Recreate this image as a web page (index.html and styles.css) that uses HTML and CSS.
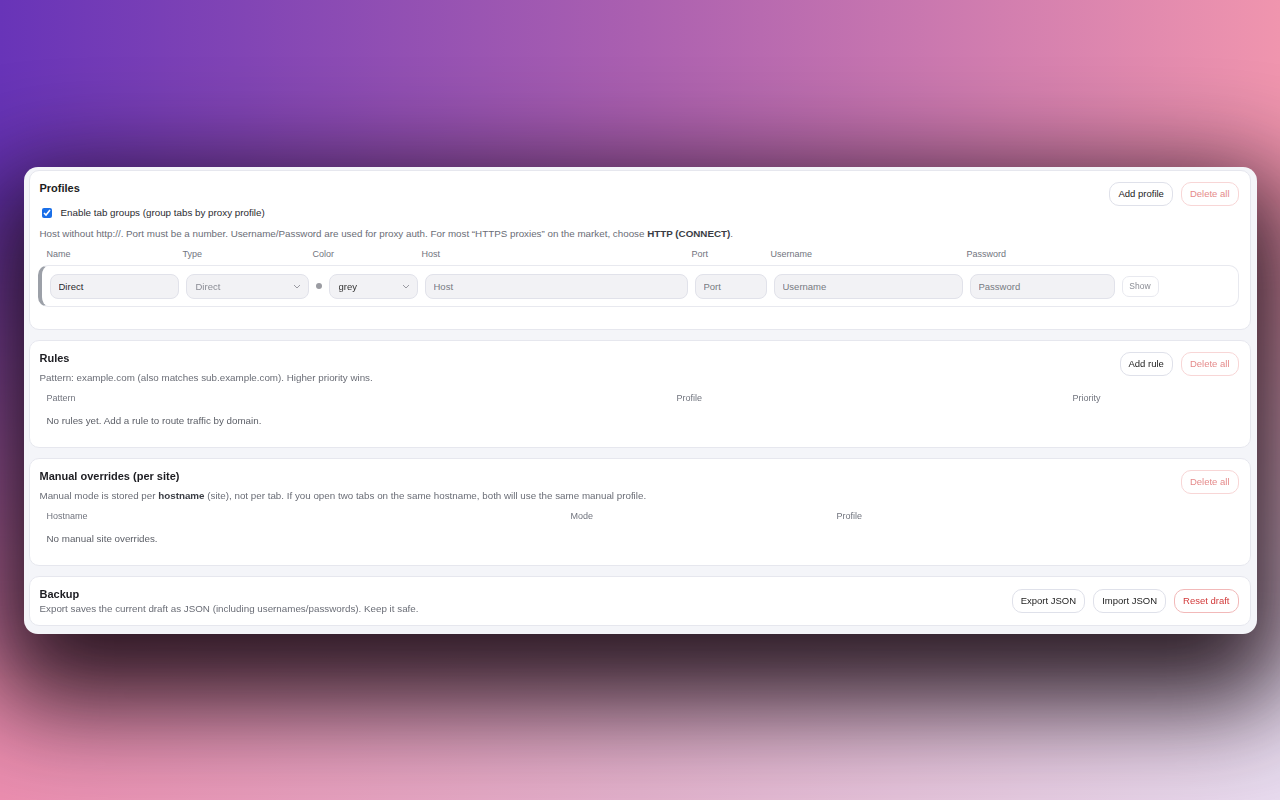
FILE: index.html
```html
<!DOCTYPE html>
<html lang="en">
<head>
  <meta charset="UTF-8" />
  <meta name="viewport" content="width=device-width, initial-scale=1.0"/>
  <title>Proxy options</title>
  <link rel="stylesheet" href="styles.css">
</head>
<body>
  <div class="window">

    <!-- Profiles -->
    <section class="card card-profiles">
      <div class="card-head">
        <div class="head-text">
          <h2>Profiles</h2>
          <label class="check"><input type="checkbox" checked> Enable tab groups (group tabs by proxy profile)</label>
        </div>
        <div class="actions">
          <button class="btn">Add profile</button>
          <button class="btn soft-red">Delete all</button>
        </div>
      </div>
      <p class="help help-profiles">Host without http://. Port must be a number. Username/Password are used for proxy auth. For most “HTTPS proxies” on the market, choose <b>HTTP (CONNECT)</b>.</p>

      <div class="profile-grid col-labels">
        <span>Name</span>
        <span>Type</span>
        <span>Color</span>
        <span>Host</span>
        <span>Port</span>
        <span>Username</span>
        <span>Password</span>
        <span></span>
      </div>

      <div class="profile-row">
        <div class="profile-grid">
          <input class="field value" type="text" value="Direct">
          <div class="select-wrap">
            <select class="field muted"><option>Direct</option></select>
            <svg class="chev" width="8" height="5" viewBox="0 0 8 5"><path d="M1 1l3 3 3-3" fill="none" stroke="#9a9aa2" stroke-width="1"/></svg>
          </div>
          <div class="color-cell">
            <span class="dot"></span>
            <div class="select-wrap">
              <select class="field"><option>grey</option></select>
              <svg class="chev" width="8" height="5" viewBox="0 0 8 5"><path d="M1 1l3 3 3-3" fill="none" stroke="#9a9aa2" stroke-width="1"/></svg>
            </div>
          </div>
          <input class="field" type="text" placeholder="Host">
          <input class="field" type="text" placeholder="Port">
          <input class="field" type="text" placeholder="Username">
          <input class="field" type="password" placeholder="Password">
          <button class="show-btn">Show</button>
        </div>
      </div>
    </section>

    <!-- Rules -->
    <section class="card">
      <div class="card-head">
        <div class="head-text">
          <h2>Rules</h2>
          <p class="help">Pattern: example.com (also matches sub.example.com). Higher priority wins.</p>
        </div>
        <div class="actions">
          <button class="btn">Add rule</button>
          <button class="btn soft-red">Delete all</button>
        </div>
      </div>
      <div class="table rules-table">
        <div class="th">Pattern</div>
        <div class="th">Profile</div>
        <div class="th">Priority</div>
      </div>
      <p class="empty">No rules yet. Add a rule to route traffic by domain.</p>
    </section>

    <!-- Manual overrides -->
    <section class="card">
      <div class="card-head">
        <div class="head-text">
          <h2>Manual overrides (per site)</h2>
          <p class="help">Manual mode is stored per <b>hostname</b> (site), not per tab. If you open two tabs on the same hostname, both will use the same manual profile.</p>
        </div>
        <div class="actions">
          <button class="btn soft-red">Delete all</button>
        </div>
      </div>
      <div class="table overrides-table">
        <div class="th">Hostname</div>
        <div class="th">Mode</div>
        <div class="th">Profile</div>
      </div>
      <p class="empty">No manual site overrides.</p>
    </section>

    <!-- Backup -->
    <section class="card card-backup">
      <div class="card-head centered">
        <div class="head-text">
          <h2>Backup</h2>
          <p class="help tight">Export saves the current draft as JSON (including usernames/passwords). Keep it safe.</p>
        </div>
        <div class="actions">
          <button class="btn">Export JSON</button>
          <button class="btn">Import JSON</button>
          <button class="btn red">Reset draft</button>
        </div>
      </div>
    </section>

  </div>
</body>
</html>
```

FILE: styles.css
```css
html, body {
  margin: 0;
  padding: 0;
}

html {
  background: linear-gradient(to right, #ec8eb0, #e4b2cd 50%, #e9dcf0);
}

body {
  height: 800px;
  display: flex;
  align-items: center;
  justify-content: center;
  font-family: "Liberation Sans", Arial, sans-serif;
  color: #1d1d22;
}

/* top half of the backdrop, faded into the bottom one */
body::before {
  content: "";
  position: fixed;
  inset: 0;
  z-index: -1;
  background: linear-gradient(to right, #6834b8, #ab60b0 50%, #f095ae);
  -webkit-mask-image: linear-gradient(to bottom, #000 25%, transparent 85%);
  mask-image: linear-gradient(to bottom, #000 25%, transparent 85%);
}

.window {
  width: 1233px;
  box-sizing: border-box;
  padding: 3px 6px 8px 5px;
  background: #f4f5f9;
  border-radius: 14px;
  display: flex;
  flex-direction: column;
  gap: 10px;
  box-shadow: 0 40px 100px 30px rgba(18, 6, 14, 0.88);
}

.card {
  background: #fff;
  border: 1px solid #e6e7ee;
  border-radius: 10px;
  padding: 10px 11px 20px 10px;
}

.card-profiles {
  padding-bottom: 22px;
}

.card-backup {
  padding-bottom: 10px;
}

.card-head {
  display: flex;
  justify-content: space-between;
  align-items: flex-start;
}

.card-head.centered {
  align-items: center;
}

h2 {
  margin: 0;
  font-size: 11px;
  line-height: 14px;
  font-weight: bold;
  color: #1d1d22;
}

.actions {
  display: flex;
  gap: 8px;
  margin-top: 1px;
}

.centered .actions {
  margin-top: 0;
}

.btn {
  height: 24px;
  padding: 0 8px;
  background: #fff;
  border: 1px solid #dfe1ea;
  border-radius: 10px;
  font-family: inherit;
  font-size: 9.5px;
  color: #222;
  cursor: pointer;
}

.btn.soft-red {
  color: #e58a8a;
  border-color: #f8d6d6;
}

.btn.red {
  color: #d23a3a;
  border-color: #f2b9b9;
}

.check {
  display: flex;
  align-items: center;
  margin-top: 12px;
  font-size: 9.8px;
  line-height: 12px;
  color: #2b2b30;
}

.check input {
  width: 10px;
  height: 10px;
  margin: 0 9px 0 2px;
  accent-color: #1a6fe8;
}

.help {
  margin: 7px 0 0;
  font-size: 9.8px;
  line-height: 12px;
  color: #6a6d76;
}

.help b {
  color: #3a3d44;
}

.help.tight {
  margin-top: 2px;
}

.help-profiles {
  margin-top: 9px;
}

/* profile grid */
.profile-grid {
  display: grid;
  grid-template-columns: 129px 123px 102px 263px 72px 189px 145px 37px;
  gap: 7px;
  align-items: center;
}

.col-labels {
  margin: 9px 0 5px;
  padding-left: 7px;
  font-size: 9px;
  line-height: 11px;
  color: #71747e;
}

.profile-row {
  margin-left: -2px;
  padding: 8px 8px 7px 8px;
  border: 1px solid #e8e9ef;
  border-left: 4px solid #9ca0a8;
  border-radius: 10px;
}

.field {
  width: 100%;
  height: 25px;
  box-sizing: border-box;
  padding: 0 8px;
  background: #f2f2f5;
  border: 1px solid #e1e2ea;
  border-radius: 8px;
  font-family: inherit;
  font-size: 9.5px;
  color: #333;
  outline: none;
}

.field::placeholder {
  color: #777a82;
}

.field.value {
  color: #2a2a2e;
}

select.field {
  appearance: none;
  padding-left: 9px;
}

.field.muted {
  color: #8a8c94;
}

.select-wrap {
  position: relative;
}

.chev {
  position: absolute;
  right: 8px;
  top: 10px;
}

.color-cell {
  display: flex;
  align-items: center;
  gap: 7px;
}

.color-cell .select-wrap {
  flex: 1;
}

.dot {
  width: 6px;
  height: 6px;
  border-radius: 50%;
  background: #9b9ca2;
  flex: none;
}

.show-btn {
  height: 21px;
  padding: 0;
  background: #fff;
  border: 1px solid #e8e9ef;
  border-radius: 7px;
  font-family: inherit;
  font-size: 8.5px;
  color: #8a8c94;
}

/* tables */
.table {
  display: grid;
  margin-top: 8px;
}

.rules-table {
  grid-template-columns: 630px 396px 1fr;
}

.overrides-table {
  grid-template-columns: 524px 266px 1fr;
}

.th {
  padding-left: 7px;
  font-size: 9px;
  line-height: 12px;
  color: #71747e;
}

.empty {
  margin: 11px 0 0;
  padding-left: 7px;
  font-size: 9.8px;
  line-height: 12px;
  color: #5d6068;
}
```
